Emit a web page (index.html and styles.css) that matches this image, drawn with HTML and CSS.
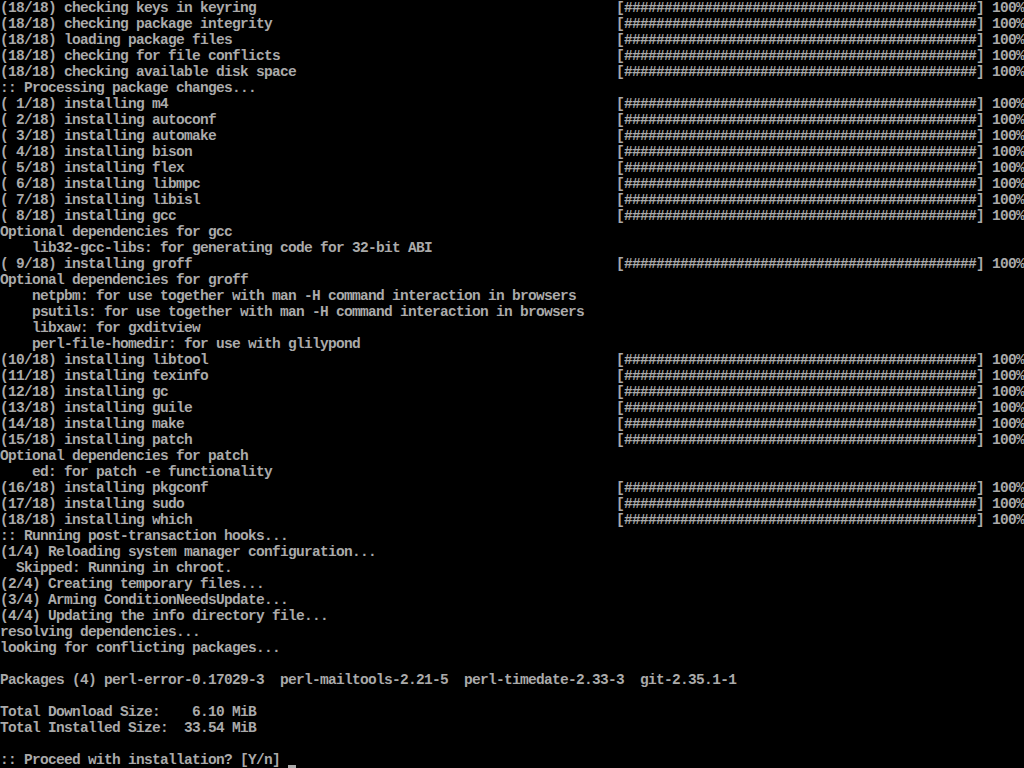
FILE: index.html
```html
<!DOCTYPE html>
<html lang="en">
<head>
    <meta charset="UTF-8">
    <meta name="viewport" content="width=device-width, initial-scale=1.0">
    <title>tty1</title>
    <link rel="stylesheet" href="styles.css">
</head>
<body>
    <div class="console">
        <div class="line"><span class="label">(18/18) checking keys in keyring</span><span class="bar">[############################################] 100%</span></div>
        <div class="line"><span class="label">(18/18) checking package integrity</span><span class="bar">[############################################] 100%</span></div>
        <div class="line"><span class="label">(18/18) loading package files</span><span class="bar">[############################################] 100%</span></div>
        <div class="line"><span class="label">(18/18) checking for file conflicts</span><span class="bar">[############################################] 100%</span></div>
        <div class="line"><span class="label">(18/18) checking available disk space</span><span class="bar">[############################################] 100%</span></div>
        <div class="line">:: Processing package changes...</div>
        <div class="line"><span class="label">( 1/18) installing m4</span><span class="bar">[############################################] 100%</span></div>
        <div class="line"><span class="label">( 2/18) installing autoconf</span><span class="bar">[############################################] 100%</span></div>
        <div class="line"><span class="label">( 3/18) installing automake</span><span class="bar">[############################################] 100%</span></div>
        <div class="line"><span class="label">( 4/18) installing bison</span><span class="bar">[############################################] 100%</span></div>
        <div class="line"><span class="label">( 5/18) installing flex</span><span class="bar">[############################################] 100%</span></div>
        <div class="line"><span class="label">( 6/18) installing libmpc</span><span class="bar">[############################################] 100%</span></div>
        <div class="line"><span class="label">( 7/18) installing libisl</span><span class="bar">[############################################] 100%</span></div>
        <div class="line"><span class="label">( 8/18) installing gcc</span><span class="bar">[############################################] 100%</span></div>
        <div class="line">Optional dependencies for gcc</div>
        <div class="line">    lib32-gcc-libs: for generating code for 32-bit ABI</div>
        <div class="line"><span class="label">( 9/18) installing groff</span><span class="bar">[############################################] 100%</span></div>
        <div class="line">Optional dependencies for groff</div>
        <div class="line">    netpbm: for use together with man -H command interaction in browsers</div>
        <div class="line">    psutils: for use together with man -H command interaction in browsers</div>
        <div class="line">    libxaw: for gxditview</div>
        <div class="line">    perl-file-homedir: for use with glilypond</div>
        <div class="line"><span class="label">(10/18) installing libtool</span><span class="bar">[############################################] 100%</span></div>
        <div class="line"><span class="label">(11/18) installing texinfo</span><span class="bar">[############################################] 100%</span></div>
        <div class="line"><span class="label">(12/18) installing gc</span><span class="bar">[############################################] 100%</span></div>
        <div class="line"><span class="label">(13/18) installing guile</span><span class="bar">[############################################] 100%</span></div>
        <div class="line"><span class="label">(14/18) installing make</span><span class="bar">[############################################] 100%</span></div>
        <div class="line"><span class="label">(15/18) installing patch</span><span class="bar">[############################################] 100%</span></div>
        <div class="line">Optional dependencies for patch</div>
        <div class="line">    ed: for patch -e functionality</div>
        <div class="line"><span class="label">(16/18) installing pkgconf</span><span class="bar">[############################################] 100%</span></div>
        <div class="line"><span class="label">(17/18) installing sudo</span><span class="bar">[############################################] 100%</span></div>
        <div class="line"><span class="label">(18/18) installing which</span><span class="bar">[############################################] 100%</span></div>
        <div class="line">:: Running post-transaction hooks...</div>
        <div class="line">(1/4) Reloading system manager configuration...</div>
        <div class="line">  Skipped: Running in chroot.</div>
        <div class="line">(2/4) Creating temporary files...</div>
        <div class="line">(3/4) Arming ConditionNeedsUpdate...</div>
        <div class="line">(4/4) Updating the info directory file...</div>
        <div class="line">resolving dependencies...</div>
        <div class="line">looking for conflicting packages...</div>
        <div class="line"> </div>
        <div class="line">Packages (4) perl-error-0.17029-3  perl-mailtools-2.21-5  perl-timedate-2.33-3  git-2.35.1-1</div>
        <div class="line"> </div>
        <div class="line">Total Download Size:    6.10 MiB</div>
        <div class="line">Total Installed Size:  33.54 MiB</div>
        <div class="line"> </div>
        <div class="line">:: Proceed with installation? [Y/n] <span class="cursor"> </span></div>
    </div>
</body>
</html>
```

FILE: styles.css
```css
html, body {
    margin: 0;
    height: 100%;
    background-color: #000000;
    overflow: hidden;
}

.console {
    width: 1024px;
    height: 768px;
    color: #aaaaaa;
    font-family: 'Liberation Mono', 'DejaVu Sans Mono', monospace;
    font-size: 14.5px;
    letter-spacing: -0.7px;
    font-weight: bold;
    line-height: 16px;
}

.line {
    display: flex;
    height: 16px;
    white-space: pre;
}

.label {
    width: 616px;
    flex-shrink: 0;
}

.bar {
    white-space: pre;
}

.cursor {
    display: inline-block;
    width: 8px;
    height: 16px;
    border-bottom: 3px solid #aaaaaa;
    box-sizing: border-box;
    margin-bottom: -2px;
}
```
